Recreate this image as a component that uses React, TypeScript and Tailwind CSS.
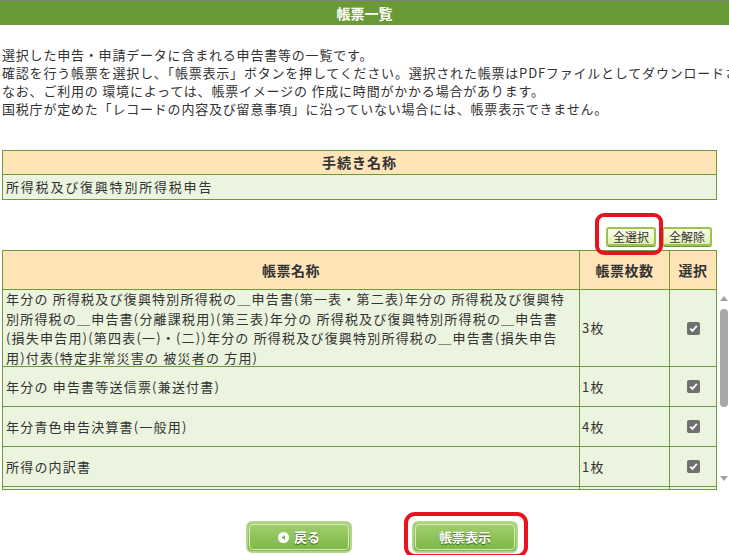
import React from 'react';

const font = { fontFamily: '"MS PGothic", "Noto Sans CJK JP", sans-serif' };

type Row = { name: React.ReactNode; count: string; h: string };

const rows: Row[] = [
  {
    name: (
      <>
        年分の 所得税及び復興特別所得税の＿申告書(第一表・第二表)年分の 所得税及び復興特
        <br />
        別所得税の＿申告書(分離課税用)(第三表)年分の 所得税及び復興特別所得税の＿申告書
        <br />
        (損失申告用)(第四表(一)・(二))年分の 所得税及び復興特別所得税の＿申告書(損失申告
        <br />
        用)付表(特定非常災害の 被災者の 方用)
      </>
    ),
    count: '3枚',
    h: 'h-[77px]',
  },
  { name: '年分の 申告書等送信票(兼送付書)', count: '1枚', h: 'h-[40px]' },
  { name: '年分青色申告決算書(一般用)', count: '4枚', h: 'h-[40px]' },
  { name: '所得の内訳書', count: '1枚', h: 'h-[40px]' },
  { name: '所得の内訳書', count: '1枚', h: 'h-[40px]' },
];

function Check() {
  return (
    <span className="inline-flex w-[13px] h-[13px] items-center justify-center rounded-[2px] bg-[#6f6f6f]">
      <svg width="9" height="9" viewBox="0 0 9 9">
        <path d="M1.2 4.6 L3.5 6.9 L7.8 1.8" stroke="#fff" strokeWidth="1.8" fill="none" />
      </svg>
    </span>
  );
}

function SmallButton({ label }: { label: string }) {
  return (
    <button className="h-[19px] px-[5px] rounded-[3px] border-2 border-[#9cc24f] bg-gradient-to-b from-[#fbfde9] to-[#e3efb8] text-[12px] leading-[14px] text-[#333] shadow-[0_1px_0_#6d9a2c]">
      {label}
    </button>
  );
}

function BigButton({ children }: { children: React.ReactNode }) {
  return (
    <button className="w-[106px] h-[32px] rounded-[6px] border-2 border-[#b3d68a] bg-gradient-to-b from-[#a3d06f] to-[#7bb544] p-[1px]">
      <span className="flex h-full items-center justify-center gap-[5px] rounded-[4px] border border-[#d7ecbf] text-[13px] leading-[16px] font-bold text-white [text-shadow:0_1px_1px_#3c5e1c]">
        {children}
      </span>
    </button>
  );
}

export default function App() {
  return (
    <div className="relative w-[729px] h-[555px] overflow-hidden bg-white text-[#333]" style={font}>
      <div className="h-px bg-[#808080]" />
      <div className="h-[24px] bg-[#699a35] flex items-center justify-center text-white font-bold text-[14px]">
        帳票一覧
      </div>

      <div className="pt-[21px] pl-[2px] text-[13px] leading-[18px] tracking-[0.8px] whitespace-nowrap">
        <p>選択した申告・申請データに含まれる申告書等の一覧です。</p>
        <p>確認を行う帳票を選択し、「帳票表示」ボタンを押してください。選択された帳票はPDFファイルとしてダウンロードされます。</p>
        <p>なお、ご利用の 環境によっては、帳票イメージの 作成に時間がかかる場合があります。</p>
        <p>国税庁が定めた「レコードの内容及び留意事項」に沿っていない場合には、帳票表示できません。</p>
      </div>

      <div className="mt-[32px] ml-[2px] w-[715px] border border-[#6b9c35]">
        <div className="h-[24px] bg-[#fee4b7] flex items-center justify-center text-[14px] font-bold tracking-[1px] border-b border-[#6b9c35]">
          手続き名称
        </div>
        <div className="h-[24px] bg-[#ebf4de] flex items-center px-[3px] text-[13px] tracking-[1.8px]">
          所得税及び復興特別所得税申告
        </div>
      </div>

      <div className="mt-[27px] h-[19px] flex justify-end gap-[6px] pr-[17px]">
        <SmallButton label="全選択" />
        <SmallButton label="全解除" />
      </div>

      <div className="mt-[4px] ml-[2px] w-[715px] border border-b-0 border-[#6b9c35] flex h-[39px] bg-[#fee4b7] text-[14px] font-bold tracking-[0.5px]">
        <div className="w-[577px] flex items-center justify-center border-r border-[#6b9c35]">帳票名称</div>
        <div className="w-[90px] flex items-center justify-center border-r border-[#6b9c35]">帳票枚数</div>
        <div className="flex-1 flex items-center justify-center">選択</div>
      </div>

      <div className="flex ml-[2px]">
        <div className="w-[715px] h-[201px] overflow-hidden border-x border-b border-[#6b9c35]">
          {rows.map((r, i) => (
            <div key={i} className={`flex ${r.h} bg-[#ebf4de] border-t border-[#6b9c35] text-[13px] tracking-[1.2px]`}>
              <div className="w-[577px] flex items-center px-[3px] leading-[19.5px] whitespace-nowrap overflow-hidden border-r border-[#6b9c35]">
                <div>{r.name}</div>
              </div>
              <div className="w-[90px] flex items-center px-[2px] border-r border-[#6b9c35]">{r.count}</div>
              <div className="flex-1 flex items-center justify-center">
                <Check />
              </div>
            </div>
          ))}
        </div>
        <div className="w-[12px] h-[200px] flex flex-col items-center pl-[2px]">
          <svg width="8" height="6" viewBox="0 0 8 6" className="mt-[6px]">
            <path d="M0 6 L4 1 L8 6 Z" fill="#a3a3a3" />
          </svg>
          <div className="mt-[8px] w-[8px] h-[98px] rounded-[4px] bg-[#a8a8a8]" />
          <div className="flex-1" />
          <svg width="8" height="6" viewBox="0 0 8 6" className="mb-[7px]">
            <path d="M0 0 L8 0 L4 5 Z" fill="#a3a3a3" />
          </svg>
        </div>
      </div>

      <div className="mt-[31px] flex gap-[60px] pl-[246px]">
        <BigButton>
          <span className="inline-flex w-[11px] h-[11px] rounded-full bg-white items-center justify-center">
            <svg width="7" height="7" viewBox="0 0 7 7">
              <path d="M1.5 3.5 L5 1 L5 6 Z" fill="#7bb544" />
            </svg>
          </span>
          戻る
        </BigButton>
        <BigButton>帳票表示</BigButton>
      </div>

      <div className="absolute left-[595px] top-[213px] w-[68px] h-[42px] rounded-[9px] border-[4px] border-[#e8131e]" />
      <div className="absolute left-[404px] top-[512px] w-[124px] h-[46px] rounded-[11px] border-[4px] border-[#e8131e]" />
    </div>
  );
}
